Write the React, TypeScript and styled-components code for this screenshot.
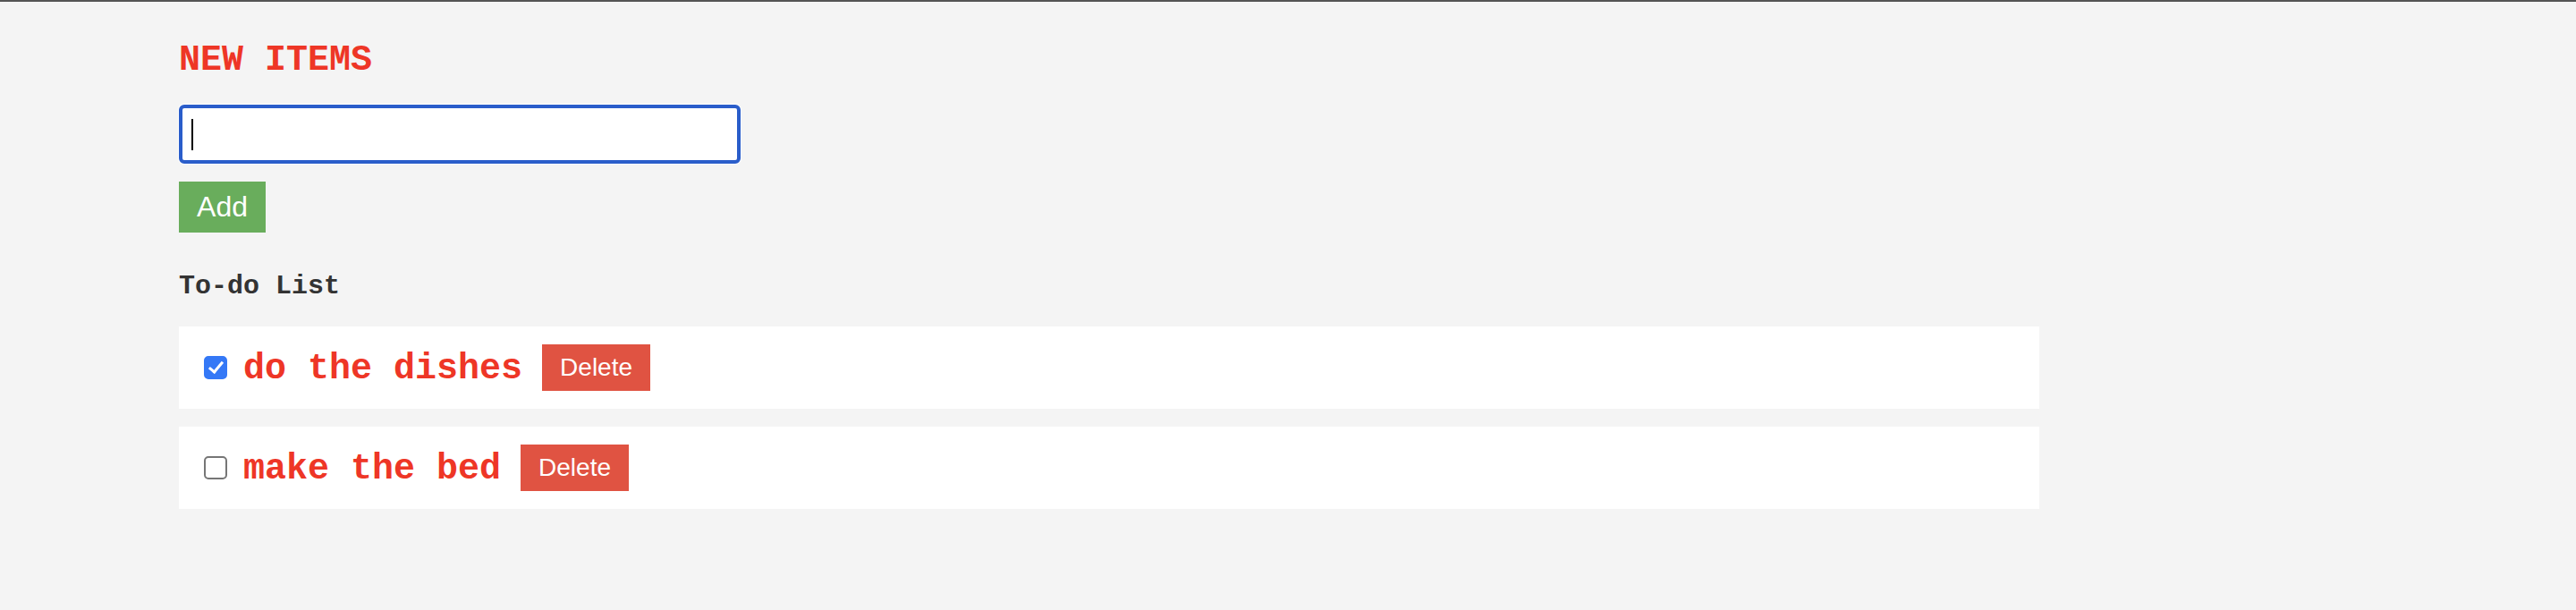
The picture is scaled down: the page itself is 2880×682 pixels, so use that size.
import React, { useState } from "react";
import styled, { createGlobalStyle } from "styled-components";

const GlobalStyle = createGlobalStyle`
  html, body {
    margin: 0;
    padding: 0;
    background: #f4f4f4;
  }
  body {
    border-top: 2px solid #555555;
    font-family: "Liberation Sans", Arial, sans-serif;
  }
`;

const Page = styled.main`
  display: flex;
  flex-direction: column;
  align-items: flex-start;
  padding: 0 0 0 200px;
  width: 2080px;
`;

const Title = styled.h1`
  margin: 46px 0 0 0;
  font-family: "Liberation Mono", "Courier New", monospace;
  font-weight: 700;
  font-size: 40px;
  line-height: 40px;
  color: #ee3626;
`;

const InputWrap = styled.div`
  position: relative;
  margin-top: 29px;
`;

const TextInput = styled.input`
  display: block;
  box-sizing: border-box;
  width: 628px;
  height: 66px;
  padding: 0 10px;
  border: 4px solid #2a5dca;
  border-radius: 6px;
  box-shadow: 0 0 0 1px #ffffff;
  background: #ffffff;
  font-family: "Liberation Sans", Arial, sans-serif;
  font-size: 32px;
  color: #000;
  caret-color: #000;
  outline: none;
`;

const Caret = styled.span`
  position: absolute;
  left: 14px;
  top: 16px;
  width: 2px;
  height: 35px;
  background: #000000;
  pointer-events: none;
`;

const Button = styled.button<{ $tone: "green" | "red"; $size: number }>`
  box-sizing: border-box;
  border: none;
  border-radius: 0;
  margin: 0;
  padding: 0;
  cursor: pointer;
  font-family: "Liberation Sans", Arial, sans-serif;
  font-size: ${(p) => p.$size}px;
  color: #ffffff;
  background: ${(p) => (p.$tone === "green" ? "#69ad5c" : "#e05342")};
`;

const AddButton = styled(Button)`
  margin-top: 20px;
  width: 97px;
  height: 57px;
`;

const DeleteButton = styled(Button)`
  width: 121px;
  height: 52px;
  margin-left: 22px;
`;

const ListTitle = styled.h2`
  margin: 45px 0 0 0;
  font-family: "Liberation Mono", "Courier New", monospace;
  font-weight: 700;
  font-size: 30px;
  line-height: 30px;
  color: #333333;
`;

const List = styled.ul`
  list-style: none;
  margin: 30px 0 0 0;
  padding: 0;
  width: 2080px;
  display: flex;
  flex-direction: column;
  gap: 20px;
`;

const Row = styled.li`
  box-sizing: border-box;
  height: 92px;
  background: #ffffff;
  display: flex;
  align-items: center;
  padding-left: 28px;
`;

const Check = styled.input`
  appearance: none;
  -webkit-appearance: none;
  box-sizing: border-box;
  margin: 0;
  width: 26px;
  height: 26px;
  border: 2px solid #767676;
  border-radius: 5px;
  background: #ffffff;
  position: relative;
  cursor: pointer;

  &:checked {
    background: #3478f6;
    border-color: #3478f6;
  }

  &:checked::after {
    content: "";
    position: absolute;
    left: 7px;
    top: 1px;
    width: 6px;
    height: 13px;
    border-right: 3px solid #ffffff;
    border-bottom: 3px solid #ffffff;
    transform: rotate(40deg);
  }
`;

const ItemText = styled.span`
  margin: 4px 0 0 18px;
  font-family: "Liberation Mono", "Courier New", monospace;
  font-weight: 700;
  font-size: 40px;
  line-height: 46px;
  color: #ee3626;
`;

type Item = { id: number; text: string; done: boolean };

export default function App() {
  const [value, setValue] = useState("");
  const [items, setItems] = useState<Item[]>([
    { id: 1, text: "do the dishes", done: true },
    { id: 2, text: "make the bed", done: false },
  ]);

  const add = () => {
    if (!value.trim()) return;
    setItems((xs) => [...xs, { id: Date.now(), text: value.trim(), done: false }]);
    setValue("");
  };

  return (
    <>
      <GlobalStyle />
      <Page>
        <Title>NEW ITEMS</Title>
        <InputWrap>
          <TextInput
            autoFocus
            value={value}
            onChange={(e) => setValue(e.target.value)}
          />
          {value === "" && <Caret />}
        </InputWrap>
        <AddButton $tone="green" $size={32} onClick={add}>
          Add
        </AddButton>
        <ListTitle>To-do List</ListTitle>
        <List>
          {items.map((it) => (
            <Row key={it.id}>
              <Check
                type="checkbox"
                checked={it.done}
                onChange={() =>
                  setItems((xs) =>
                    xs.map((x) => (x.id === it.id ? { ...x, done: !x.done } : x))
                  )
                }
              />
              <ItemText>{it.text}</ItemText>
              <DeleteButton
                $tone="red"
                $size={28}
                onClick={() => setItems((xs) => xs.filter((x) => x.id !== it.id))}
              >
                Delete
              </DeleteButton>
            </Row>
          ))}
        </List>
      </Page>
    </>
  );
}
